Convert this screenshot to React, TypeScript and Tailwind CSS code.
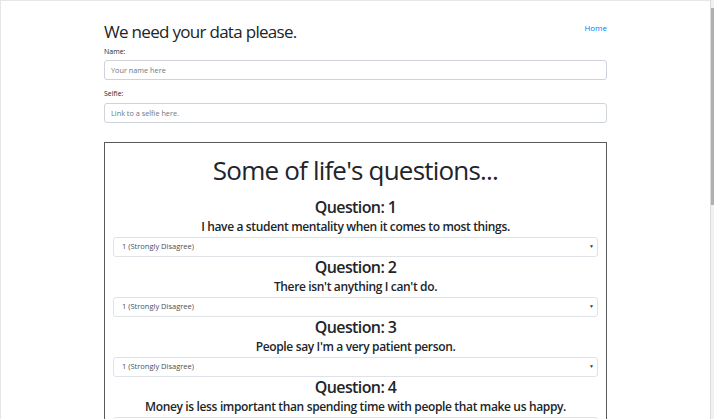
import React from "react";

const questions = [
    "I have a student mentality when it comes to most things.",
    "There isn't anything I can't do.",
    "People say I'm a very patient person.",
    "Money is less important than spending time with people that make us happy.",
];

function Select() {
    return (
        <div className="h-[20px] mx-[8px] flex items-center justify-between pl-[8px] pr-[3px] border border-[#dfe3e7] rounded-[3px] bg-white text-[7.5px] text-[#495057]">
            <span>1 (Strongly Disagree)</span>
            <span className="text-[5px] text-[#343a40]">▼</span>
        </div>
    );
}

export default function App() {
    return (
        <div className="w-[714px] h-[419px] overflow-hidden flex bg-white text-[#212529]" style={{ fontFamily: '"Open Sans", sans-serif' }}>
            <div className="flex-1 border-l border-t border-[#e6e6e6]">
                <div className="w-[503px] mx-auto pt-[18px]">
                    <div className="flex items-start justify-between">
                        <h1 className="text-[17px] leading-[26px] font-medium tracking-[-0.7px]">We need your data please.</h1>
                        <a className="text-[8px] leading-[12px] mt-[3px] text-[#007bff]">Home</a>
                    </div>
                    <label className="block text-[7px] leading-[12px] mt-[1px]">Name:</label>
                    <div className="mt-[2px] h-[20px] border border-[#ced4da] rounded-[3px] flex items-center px-[6px] text-[7.3px] text-[#6c757d]">Your name here</div>
                    <label className="block text-[7px] leading-[12px] mt-[8px]">Selfie:</label>
                    <div className="mt-[3px] h-[20px] border border-[#ced4da] rounded-[3px] flex items-center px-[6px] text-[7.3px] text-[#6c757d]">Link to a selfie here.</div>

                    <div className="mt-[19px] border border-[#5a5a5a] pt-[7px] pb-[10px]">
                        <h2 className="text-center text-[26px] leading-[40px] tracking-[-0.8px]">Some of life's questions...</h2>
                        <div className="mt-[7px]">
                            {questions.map((q, i) => (
                                <div key={i}>
                                    <h3 className="text-center text-[16px] leading-[20px] font-semibold tracking-[-0.6px]">Question: {i + 1}</h3>
                                    <p className="text-center text-[12px] leading-[20px] font-semibold tracking-[-0.35px]">{q}</p>
                                    <Select />
                                </div>
                            ))}
                        </div>
                    </div>
                </div>
            </div>
            <div className="w-[4px] bg-[#f1f1f1] border-l border-[#dcdcdc]">
                <div className="mt-[8px] h-[197px] bg-[#b0b0b0]" />
            </div>
        </div>
    );
}
